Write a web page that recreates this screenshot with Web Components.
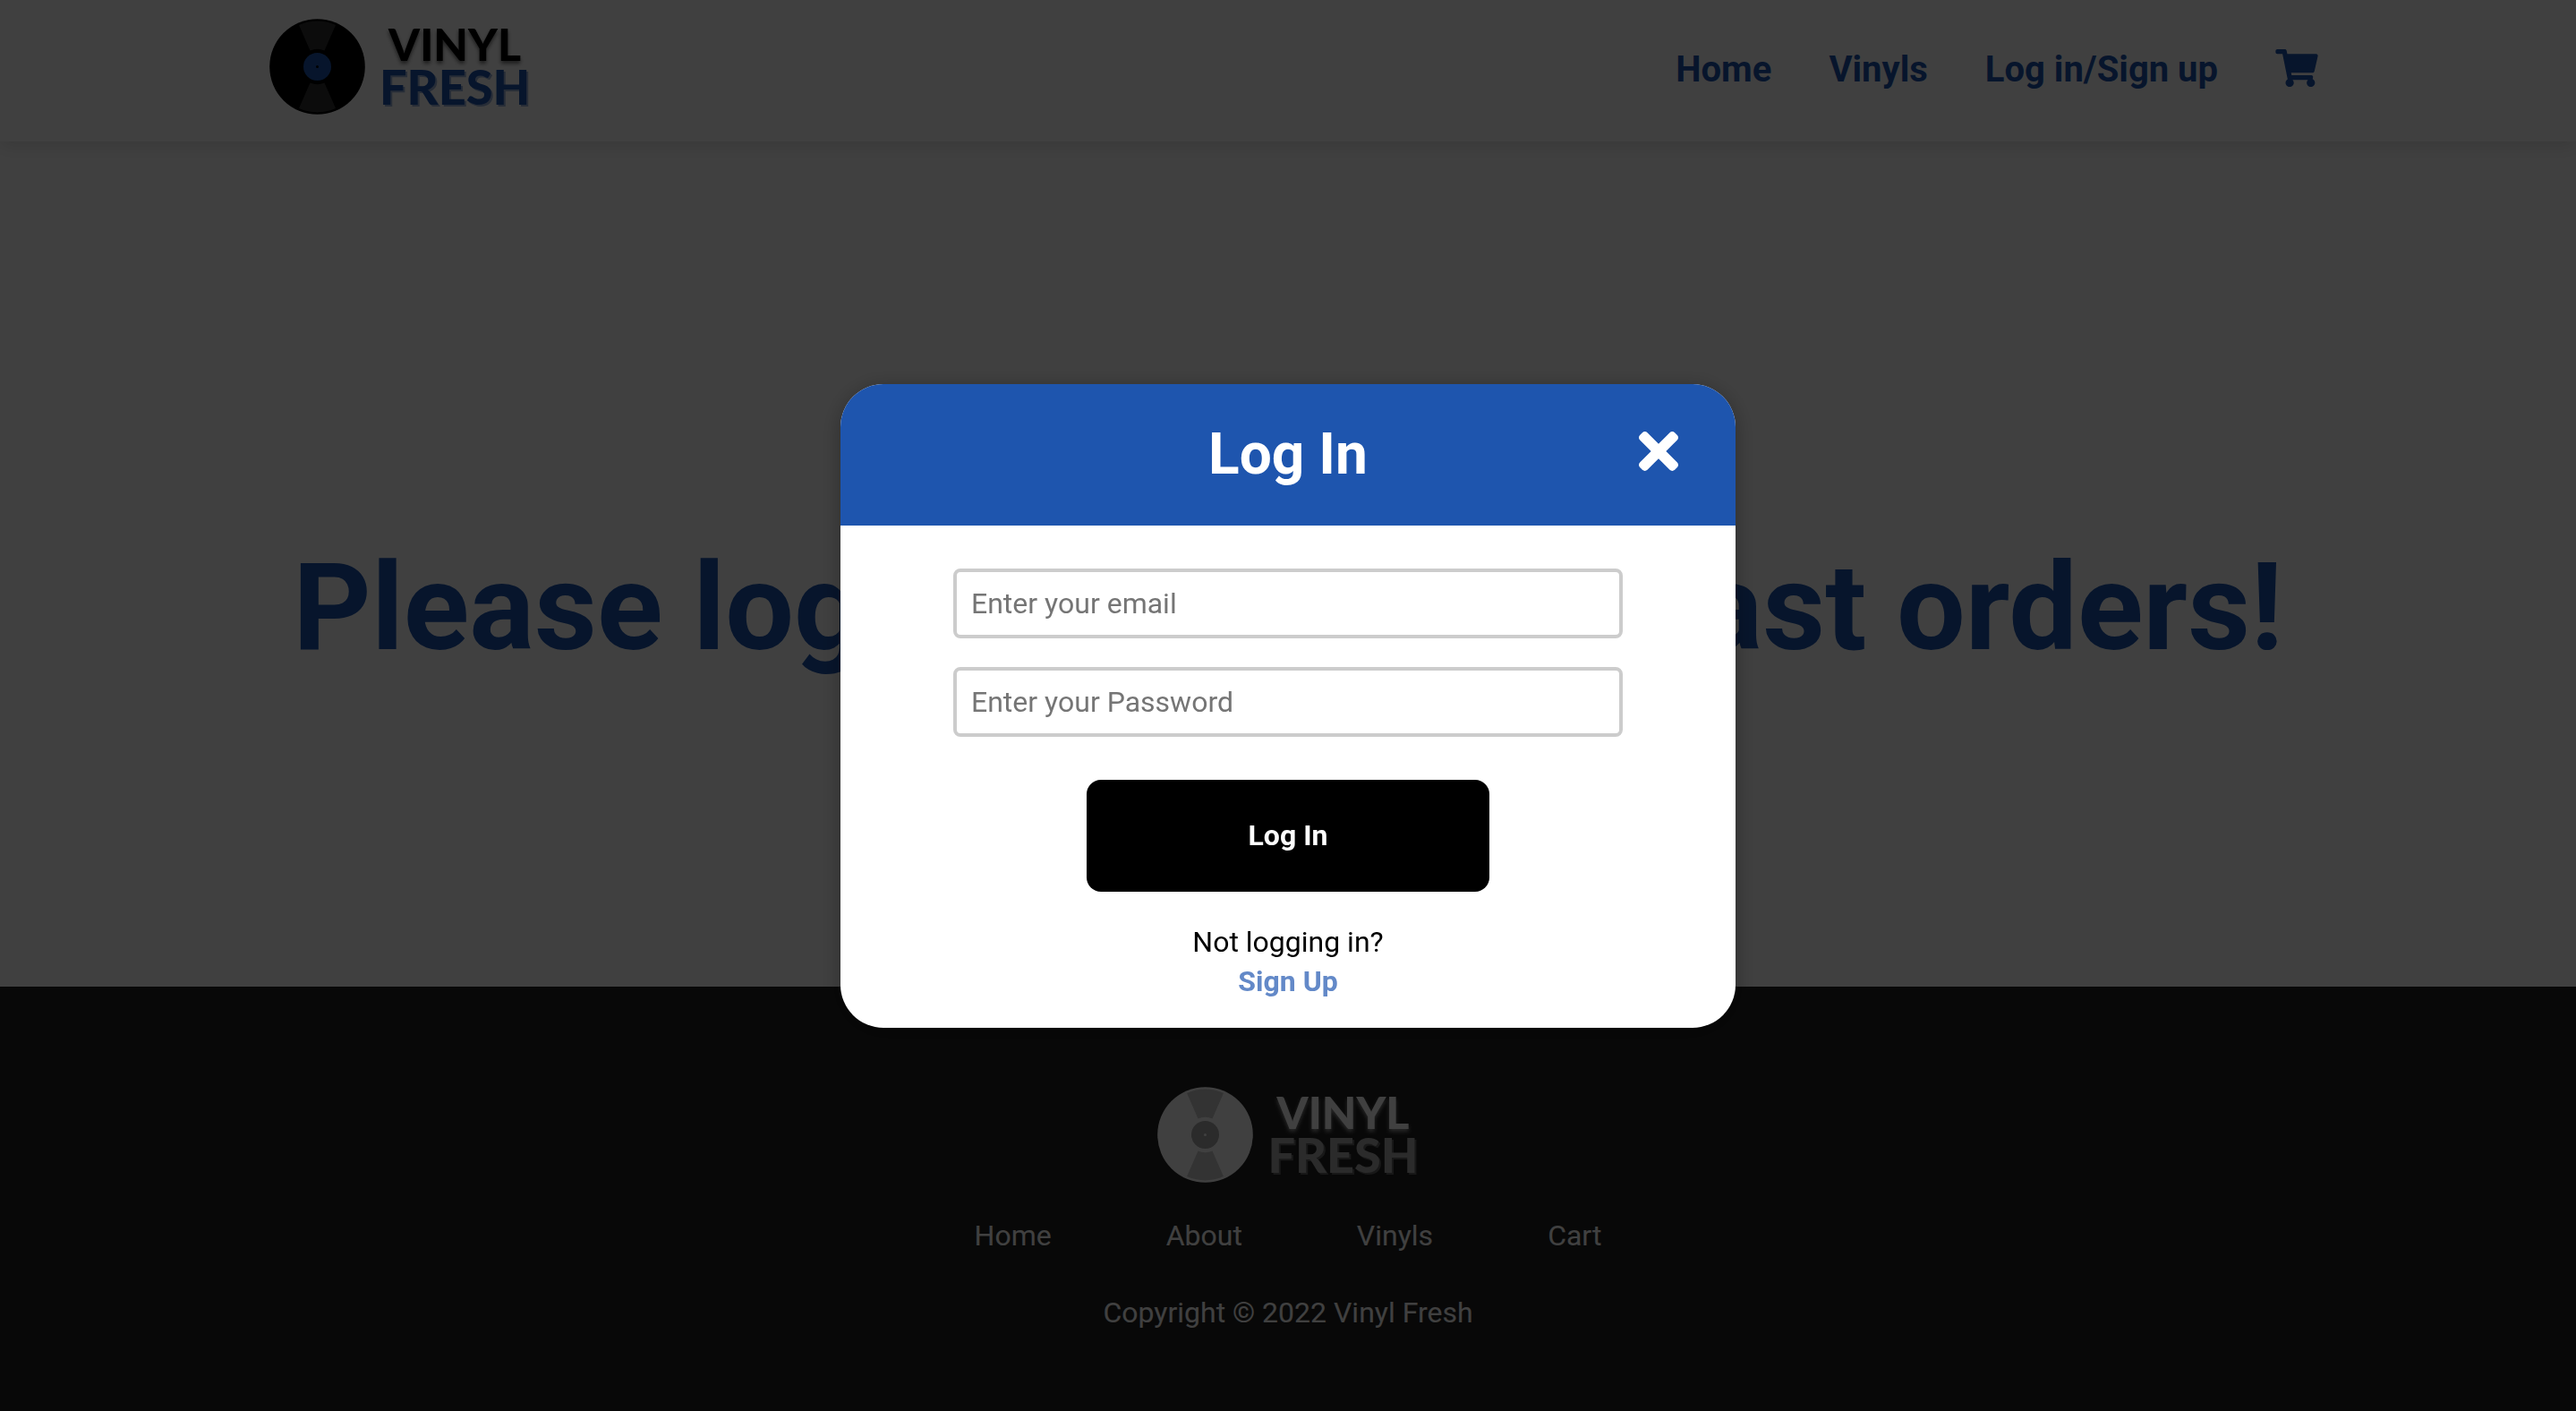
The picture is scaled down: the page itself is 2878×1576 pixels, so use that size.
<!DOCTYPE html>
<html lang="en">
<head>
<meta charset="utf-8">
<title>Vinyl Fresh</title>
<style>
html, body { margin: 0; height: 100%; }
body { background: #fff; font-family: Roboto, "Liberation Sans", sans-serif; font-size: 32px; line-height: 44px; color: #000; }
</style>
</head>
<body>
<vinyl-app></vinyl-app>
<script>
class VinylLogo extends HTMLElement {
  connectedCallback() {
    this.attachShadow({ mode: 'open' }).innerHTML = `
<style>
:host { display: flex; align-items: center; gap: 16px; --disc: #000; --shine: #333; --label: #1e55ae; }
:host([tone="light"]) { --disc: #fff; --shine: #ccc; --label: #aaa; }
svg { display: block; width: 107px; height: 107px; }
.words { display: flex; flex-direction: column; align-items: center; padding-bottom: 4px; font: 900 54px/47px Lato, sans-serif; }
.top { font-size: 50px; color: var(--disc); text-shadow: 0 3px 4px color-mix(in srgb, var(--disc) 55%, transparent); }
.bottom { color: var(--label); text-shadow: 2px 2px 0 color-mix(in srgb, var(--label) 45%, transparent); }
</style>
<svg viewBox="0 0 107 107" aria-hidden="true">
<circle cx="53.500" cy="53.500" r="53.300" fill="var(--disc)"/>
<path d="M33 7a52 52 0 0 1 41 0L61.500 35.500a20 20 0 0 0-16 0ZM33 100a52 52 0 0 0 41 0L61.500 71.500a20 20 0 0 1-16 0Z" fill="var(--shine)"/>
<circle cx="53.500" cy="53.500" r="15.500" fill="var(--label)"/>
<circle cx="53.500" cy="53.500" r="1.500" fill="var(--disc)"/>
</svg>
<div class="words"><span class="top">VINYL</span><span class="bottom">FRESH</span></div>`;
  }
}
customElements.define('vinyl-logo', VinylLogo);

class SiteHeader extends HTMLElement {
  connectedCallback() {
    this.attachShadow({ mode: 'open' }).innerHTML = `
<style>
:host { display: flex; justify-content: space-between; box-sizing: border-box; height: 158px; padding: 21px 288px 0 301px; background: #fff; box-shadow: 0 4px 20px rgba(0,0,0,.14); position: relative; }
vinyl-logo { align-self: flex-start; }
nav { display: flex; align-items: center; align-self: flex-start; gap: 64px; height: 114px; }
a { color: #1e55ae; text-decoration: none; font-weight: 700; font-size: 40px; line-height: 48px; }
svg { display: block; width: 48px; height: 42px; padding-bottom: 4px; }
</style>
<vinyl-logo></vinyl-logo>
<nav>
<a href="#home">Home</a><a href="#vinyls">Vinyls</a><a href="#login">Log in/Sign up</a>
<a href="#cart" aria-label="Cart"><svg viewBox="0 0 576 512" fill="currentColor"><path d="M528.120 301.319l47.273-208C578.806 78.301 567.391 64 551.990 64H159.208l-9.166-44.810C147.758 8.021 137.930 0 126.529 0H24C10.745 0 0 10.745 0 24v16c0 13.255 10.745 24 24 24h69.883l70.248 343.435C147.325 417.100 136 435.222 136 456c0 30.928 25.072 56 56 56s56-25.072 56-56c0-15.674-6.447-29.835-16.824-40h209.647C430.447 426.165 424 440.326 424 456c0 30.928 25.072 56 56 56s56-25.072 56-56c0-22.172-12.888-41.332-31.579-50.405l5.517-24.276c3.413-15.018-8.002-29.319-23.403-29.319H218.117l-6.545-32h293.145c11.206 0 20.920-7.754 23.403-18.681z"/></svg></a>
</nav>`;
  }
}
customElements.define('site-header', SiteHeader);

class SiteFooter extends HTMLElement {
  connectedCallback() {
    this.attachShadow({ mode: 'open' }).innerHTML = `
<style>
:host { display: flex; flex-direction: column; align-items: center; box-sizing: border-box; height: 474px; padding-top: 112px; background: #222; color: #fff; }
nav { display: flex; gap: 128px; margin: 37px 0 42px; }
a { color: inherit; text-decoration: none; }
p { margin: 0; }
</style>
<vinyl-logo tone="light"></vinyl-logo>
<nav><a href="#home">Home</a><a href="#about">About</a><a href="#vinyls">Vinyls</a><a href="#cart">Cart</a></nav>
<p>Copyright © 2022 Vinyl Fresh</p>`;
  }
}
customElements.define('site-footer', SiteFooter);

class LoginDialog extends HTMLElement {
  connectedCallback() {
    this.attachShadow({ mode: 'open' }).innerHTML = `
<style>
:host { position: fixed; inset: 0; display: flex; align-items: center; justify-content: center; background: rgba(0,0,0,.75); }
section { width: 1000px; border-radius: 48px; overflow: hidden; background: #fff; box-shadow: 0 4px 24px rgba(0,0,0,.3); }
header { display: grid; grid-template-columns: 1fr auto 1fr; align-items: center; height: 158px; box-sizing: border-box; padding: 0 64px; background: #1e55ae; color: #fff; }
h2 { grid-column: 2; margin: 0; font-size: 64px; line-height: 76px; }
.close { justify-self: end; border: 0; padding: 0 0 8px; background: none; color: inherit; }
.close svg { display: block; width: 44px; height: 64px; }
form { display: flex; flex-direction: column; align-items: center; padding: 48px 0 30px; }
.field { box-sizing: border-box; width: 748px; height: 78px; margin: 0 0 32px; padding: 0 16px; border: 4px solid #ccc; border-radius: 8px; background: #fff; font: inherit; }
.field::placeholder { color: #757575; }
.submit { width: 450px; height: 125px; margin: 16px 0 34px; border: 0; border-radius: 16px; background: #000; color: #fff; font: inherit; font-weight: 700; }
p { margin: 0; }
a { color: #6389c8; font-weight: 700; text-decoration: none; }
</style>
<section role="dialog" aria-label="Log In">
<header><h2>Log In</h2><button class="close" type="button" aria-label="Close"><svg viewBox="0 0 352 512" fill="currentColor"><path d="M242.720 256l100.070-100.070c12.280-12.280 12.280-32.190 0-44.480l-22.240-22.240c-12.280-12.280-32.190-12.280-44.480 0L176 189.280 75.930 89.210c-12.280-12.280-32.190-12.280-44.480 0L9.210 111.450c-12.280 12.280-12.280 32.190 0 44.480L109.280 256 9.210 356.070c-12.280 12.280-12.280 32.190 0 44.480l22.240 22.240c12.280 12.280 32.200 12.280 44.480 0L176 322.720l100.070 100.070c12.280 12.280 32.200 12.280 44.480 0l22.240-22.240c12.280-12.280 12.280-32.190 0-44.480L242.720 256z"/></svg></button></header>
<form>
<input class="field" type="email" aria-label="Email" placeholder="Enter your email">
<input class="field" type="password" aria-label="Password" placeholder="Enter your Password">
<button class="submit" type="button">Log In</button>
<p>Not logging in?</p>
<a href="#signup">Sign Up</a>
</form>
</section>`;
  }
}
customElements.define('login-dialog', LoginDialog);

class VinylApp extends HTMLElement {
  connectedCallback() {
    this.attachShadow({ mode: 'open' }).innerHTML = `
<style>
:host { display: flex; flex-direction: column; min-height: 100%; }
main { flex: 1; display: flex; justify-content: center; align-items: center; padding-top: 98px; }
h1 { margin: 0; font-size: 136px; line-height: 160px; color: #1e55ae; white-space: nowrap; }
</style>
<site-header></site-header>
<main><h1>Please login to see your past orders!</h1></main>
<site-footer></site-footer>
<login-dialog></login-dialog>`;
  }
}
customElements.define('vinyl-app', VinylApp);
</script>
</body>
</html>
